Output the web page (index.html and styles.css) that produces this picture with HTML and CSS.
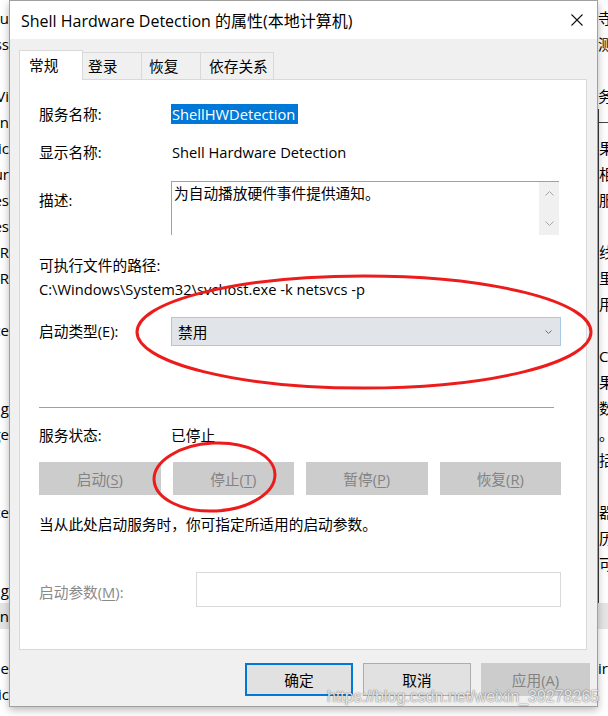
FILE: index.html
```html
<!DOCTYPE html>
<html lang="zh-CN">
<head>
<meta charset="utf-8">
<title>Shell Hardware Detection 的属性(本地计算机)</title>
<link rel="stylesheet" href="styles.css">
</head>
<body>
<div class="screen">
  <div class="strip strip-left">
    <div class="bg-row">lu</div>
    <div class="bg-row">ss</div>
    <div class="bg-row"></div>
    <div class="bg-row">Vi</div>
    <div class="bg-row">nn</div>
    <div class="bg-row">tic</div>
    <div class="bg-row">ur</div>
    <div class="bg-row">es</div>
    <div class="bg-row">es</div>
    <div class="bg-row">R</div>
    <div class="bg-row">R</div>
    <div class="bg-row"></div>
    <div class="bg-row">ce</div>
    <div class="bg-row"></div>
    <div class="bg-row"></div>
    <div class="bg-row">g</div>
    <div class="bg-row">ge</div>
    <div class="bg-row"></div>
    <div class="bg-row"></div>
    <div class="bg-row">ce</div>
    <div class="bg-row"></div>
    <div class="bg-row"></div>
    <div class="bg-row">ag</div>
    <div class="bg-row bg-row-selected">n</div>
    <div class="bg-row"></div>
    <div class="bg-row">ne</div>
    <div class="bg-row">ic</div>
  </div>

  <div class="dialog">
    <div class="titlebar">
      <div class="title">Shell Hardware Detection 的属性(本地计算机)</div>
      <div class="close">
        <svg width="12" height="12" viewBox="0 0 12 12"><path d="M0.5 0.5 L11.5 11.5 M11.5 0.5 L0.5 11.5" stroke="#111" stroke-width="1.1" fill="none"/></svg>
      </div>
    </div>

    <div class="main">
      <div class="tabs">
        <div class="tab tab-active tab-general">常规</div>
        <div class="tab tab-logon">登录</div>
        <div class="tab tab-recovery">恢复</div>
        <div class="tab tab-deps">依存关系</div>
      </div>
      <div class="panel">
        <div class="field f-name">
          <div class="field-label">服务名称:</div>
          <div class="field-value"><span class="selected">ShellHWDetection</span></div>
        </div>
        <div class="field f-display">
          <div class="field-label">显示名称:</div>
          <div class="field-value">Shell Hardware Detection</div>
        </div>
        <div class="field f-desc">
          <div class="field-label desc-label">描述:</div>
          <div class="desc-box">
            <div class="desc-text">为自动播放硬件事件提供通知。</div>
            <div class="scrollbar">
              <svg width="9" height="5" viewBox="0 0 9 5"><polyline points="0.5,4.5 4.5,0.5 8.5,4.5" fill="none" stroke="#a6a6a6" stroke-width="1"/></svg>
              <svg width="9" height="5" viewBox="0 0 9 5"><polyline points="0.5,0.5 4.5,4.5 8.5,0.5" fill="none" stroke="#a6a6a6" stroke-width="1"/></svg>
            </div>
          </div>
        </div>
        <div class="path-label">可执行文件的路径:</div>
        <div class="path-value">C:\Windows\System32\svchost.exe -k netsvcs -p</div>
        <div class="field f-startup">
          <div class="field-label startup-label">启动类型(E):</div>
          <div class="combo">
            <span>禁用</span>
            <svg width="7" height="4" viewBox="0 0 7 4"><polyline points="0.5,0.5 3.5,3.5 6.5,0.5" fill="none" stroke="#6f6f6f" stroke-width="1"/></svg>
          </div>
        </div>
        <div class="separator"></div>
        <div class="field f-status">
          <div class="field-label">服务状态:</div>
          <div class="field-value">已停止</div>
        </div>
        <div class="svc-buttons">
          <div class="btn btn-disabled">启动(<u>S</u>)</div>
          <div class="btn btn-disabled">停止(<u>T</u>)</div>
          <div class="btn btn-disabled">暂停(<u>P</u>)</div>
          <div class="btn btn-disabled">恢复(<u>R</u>)</div>
        </div>
        <div class="note">当从此处启动服务时，你可指定所适用的启动参数。</div>
        <div class="field f-params">
          <div class="field-label params-label">启动参数(<u>M</u>):</div>
          <div class="params-input"></div>
        </div>
      </div>
    </div>

    <div class="footer">
      <div class="btn btn-default">确定</div>
      <div class="btn btn-normal">取消</div>
      <div class="btn btn-disabled btn-apply">应用(A)</div>
    </div>
  </div>

  <div class="strip strip-right">
    <div class="bg-row">寺。</div>
    <div class="bg-row">测试</div>
    <div class="bg-row"></div>
    <div class="bg-row">务</div>
    <div class="bg-group">
      <div class="bg-row bg-rule"><span class="rule-line"></span></div>
      <div class="bg-row">果</div>
      <div class="bg-row">相关</div>
      <div class="bg-row">服</div>
      <div class="bg-row"></div>
      <div class="bg-row">线</div>
      <div class="bg-row">里<span class="mark"></span></div>
      <div class="bg-row">用</div>
      <div class="bg-row"></div>
      <div class="bg-row">C)</div>
      <div class="bg-row">果</div>
      <div class="bg-row">数</div>
      <div class="bg-row">。</div>
      <div class="bg-row">括</div>
      <div class="bg-row"></div>
      <div class="bg-row">器</div>
      <div class="bg-row">历</div>
      <div class="bg-row">可</div>
      <div class="bg-row"></div>
    </div>
    <div class="bg-row bg-row-selected"></div>
    <div class="bg-row"></div>
    <div class="bg-row">ir</div>
    <div class="bg-row"></div>
  </div>
</div>

<svg class="marks" width="608" height="716" viewBox="0 0 608 716">
  <ellipse cx="364" cy="332" rx="227" ry="56" fill="none" stroke="#ec1c1c" stroke-width="3"/>
  <ellipse cx="214.5" cy="477" rx="60.5" ry="34" transform="rotate(-3 214.5 477)" fill="none" stroke="#ec1c1c" stroke-width="3"/>
</svg>

<div class="watermark">https://blog.csdn.net/weixin_39278265</div>
</body>
</html>
```

FILE: styles.css
```css
* {
  box-sizing: border-box;
}

html,
body {
  margin: 0;
  padding: 0;
}

body {
  width: 608px;
  height: 716px;
  overflow: hidden;
  position: relative;
  background: #ffffff;
  color: #000000;
  font-family: "Open Sans", "Noto Sans CJK SC", sans-serif;
  font-size: 14.7px;
}

u {
  text-decoration: underline;
  text-underline-offset: 2px;
}

.screen {
  display: flex;
  height: 716px;
}

/* background window slivers */
.strip {
  flex: none;
  overflow: hidden;
  padding-top: 5px;
  background: #ffffff;
  font-size: 15px;
  color: #000000;
}

.strip-left {
  width: 9px;
}

.strip-right {
  width: 10px;
}

.bg-row {
  height: 26px;
  line-height: 26px;
  white-space: nowrap;
  display: flex;
  align-items: center;
}

.strip-left .bg-row {
  justify-content: flex-end;
}

.bg-row-selected {
  background: #e5e5e5;
}

.bg-group {
  border-left: 1px solid #3a3a3a;
}

.rule-line {
  display: block;
  width: 100%;
  height: 1px;
  background: #444444;
}

.mark {
  display: inline-block;
  width: 2px;
  height: 12px;
  margin-left: 2px;
  background: #c58a2a;
}

/* dialog */
.dialog {
  flex: none;
  width: 589px;
  height: 707px;
  border: 1px solid #a0a0a0;
  background: #f0f0f0;
  display: flex;
  flex-direction: column;
  box-shadow: 0 3px 8px rgba(0, 0, 0, 0.28);
  position: relative;
  z-index: 1;
}

.titlebar {
  flex: none;
  height: 38px;
  background: #ffffff;
  display: flex;
  align-items: center;
  padding-left: 11px;
}

.title {
  flex: 1;
  font-size: 16px;
  white-space: nowrap;
}

.close {
  width: 40px;
  height: 38px;
  display: flex;
  align-items: center;
  justify-content: center;
}

.main {
  flex: none;
  padding: 11px 10px 0 9px;
}

.tabs {
  display: flex;
  align-items: flex-end;
  height: 30px;
  margin-bottom: -1px;
  position: relative;
  z-index: 1;
}

.tab {
  height: 28px;
  line-height: 24px;
  padding-top: 1px;
  border: 1px solid #d9d9d9;
  border-left: none;
  background: #f0f0f0;
  white-space: nowrap;
}

.tab-active {
  height: 30px;
  line-height: 28px;
  padding-top: 0;
  border-left: 1px solid #d9d9d9;
  border-bottom: none;
  background: #ffffff;
}

.tab-general {
  width: 64px;
  padding-left: 9px;
}

.tab-logon {
  width: 59px;
  padding-left: 5px;
}

.tab-recovery {
  width: 59px;
  padding-left: 7px;
}

.tab-deps {
  width: 73px;
  padding-left: 8px;
}

.panel {
  height: 571px;
  background: #ffffff;
  border: 1px solid #d9d9d9;
  padding: 0 25px 0 19px;
}

.field {
  display: grid;
  grid-template-columns: 132px 1fr;
  align-items: start;
}

.field-label,
.field-value {
  line-height: 20px;
  white-space: nowrap;
}

.f-name {
  margin-top: 24px;
}

.selected {
  display: inline-block;
  height: 20px;
  line-height: 20px;
  padding: 0 3px 0 1px;
  background: #0078d7;
  color: #ffffff;
}

.f-display {
  margin-top: 18px;
}

.f-display .field-value {
  padding-left: 1px;
}

.f-desc {
  margin-top: 19px;
}

.desc-label {
  padding-top: 9px;
}

.desc-box {
  width: 388px;
  height: 54px;
  display: flex;
  border-top: 1px solid #a0a0a0;
  border-left: 1px solid #a0a0a0;
}

.desc-text {
  flex: 1;
  padding: 1px 0 0 2px;
  line-height: 20px;
  white-space: nowrap;
}

.scrollbar {
  width: 20px;
  background: #f0f0f0;
  display: flex;
  flex-direction: column;
  align-items: center;
  justify-content: space-between;
  padding: 9px 0 9px;
}

.scrollbar svg {
  display: block;
}

.path-label {
  margin-top: 20px;
  line-height: 20px;
}

.path-value {
  margin-top: 4px;
  line-height: 20px;
  white-space: nowrap;
}

.f-startup {
  margin-top: 18px;
}

.startup-label {
  line-height: 29px;
}

.combo {
  width: 390px;
  height: 29px;
  display: flex;
  align-items: center;
  justify-content: space-between;
  padding: 0 8px 0 6px;
  background: #e1e5e9;
  border: 1px solid #a8c8e6;
}

.combo svg {
  display: block;
}

.separator {
  margin-top: 61px;
  width: 515px;
  height: 1px;
  background: #a0a0a0;
}

.f-status {
  margin-top: 17px;
}

.svc-buttons {
  margin-top: 17px;
  display: grid;
  grid-template-columns: repeat(4, 1fr);
  column-gap: 12px;
}

.btn {
  height: 33px;
  display: flex;
  align-items: center;
  justify-content: center;
  white-space: nowrap;
}

.btn-disabled {
  background: #cccccc;
  border: 1px solid #cccccc;
  color: #838383;
}

.note {
  margin-top: 19px;
  line-height: 20px;
  white-space: nowrap;
}

.f-params {
  margin-top: 38px;
  grid-template-columns: 157px 1fr;
}

.params-label {
  padding-top: 10px;
  color: #8a8a8a;
}

.params-input {
  height: 35px;
  border: 1px solid #d9d9d9;
  background: #ffffff;
}

.footer {
  flex: none;
  display: flex;
  justify-content: flex-end;
  column-gap: 10px;
  padding: 13px 7px 0 0;
}

.footer .btn {
  width: 108px;
}

.footer .btn-apply {
  width: 109px;
}

.btn-default {
  background: #e1e1e1;
  border: 2px solid #0078d7;
}

.btn-normal {
  background: #e1e1e1;
  border: 1px solid #adadad;
}

/* overlays */
.marks {
  position: absolute;
  left: 0;
  top: 0;
  z-index: 5;
  pointer-events: none;
}

.watermark {
  position: absolute;
  left: 327px;
  top: 686px;
  z-index: 6;
  font-family: "Liberation Sans", Arial, sans-serif;
  font-size: 16px;
  line-height: 22px;
  color: rgba(255, 255, 255, 0.85);
  text-shadow: 0 0 1px rgba(0, 0, 0, 0.55), 0 0 2px rgba(0, 0, 0, 0.25);
  white-space: nowrap;
}
```
